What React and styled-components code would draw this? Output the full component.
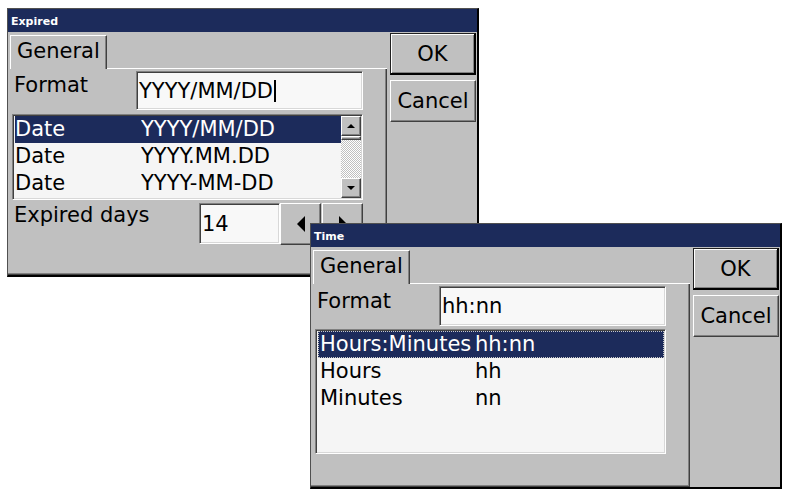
import React from "react";
import styled, { createGlobalStyle } from "styled-components";

const Global = createGlobalStyle`
  html, body { margin: 0; padding: 0; background: #fff; }
  body { width: 792px; height: 500px; position: relative; overflow: hidden; }
`;

const FONT = `"DejaVu Sans", Verdana, sans-serif`;
const NAVY = "#1c2b5b";

const Desktop = styled.div`
  position: relative;
  width: 792px;
  height: 500px;
  background: #fff;
`;

const Window = styled.div`
  position: absolute;
  left: ${(p) => p.$x}px;
  top: ${(p) => p.$y}px;
  width: ${(p) => p.$w}px;
  height: ${(p) => p.$h}px;
  z-index: ${(p) => p.$z};
  box-sizing: border-box;
  background: #c0c0c0;
  border-style: solid;
  border-color: #505050 #000 #000 #505050;
  border-width: 1px 2px 2px 1px;
  display: flex;
  flex-direction: column;
  font-family: ${FONT};
  color: #000;
`;

const TitleBar = styled.div`
  height: 23px;
  flex: none;
  background: ${NAVY};
  color: #fff;
  font: bold 11px ${FONT};
  display: flex;
  align-items: center;
  padding: 2px 0 0 3px;
  box-sizing: border-box;
`;

const Body = styled.div`
  flex: 1;
  display: flex;
  min-height: 0;
`;

const TabArea = styled.div`
  width: 379px;
  flex: none;
  display: flex;
  flex-direction: column;
`;

const TabStrip = styled.div`
  height: 37px;
  flex: none;
  display: flex;
  align-items: flex-end;
  padding-left: 2px;
  box-sizing: border-box;
`;

const Tab = styled.div`
  height: 34px;
  box-sizing: border-box;
  padding: 3px 6px 0 6px;
  border-top: 1px solid #fff;
  border-left: 1px solid #fff;
  border-right: 1px solid #404040;
  box-shadow: inset -1px 0 #808080;
  font-size: 21px;
  line-height: 24px;
`;

const TabFiller = styled.div`
  flex: 1;
  border-bottom: 1px solid #fff;
`;

const Pane = styled.div`
  flex: 1;
  display: flex;
  flex-direction: column;
  gap: 3px;
  padding: 2px 0 0 4px;
  box-sizing: border-box;
  border-right: 1px solid #404040;
  border-bottom: 1px solid #404040;
  box-shadow: inset -1px -1px #808080;
`;

const FieldRow = styled.div`
  display: flex;
  align-items: flex-start;
  height: ${(p) => p.$h}px;
  flex: none;
`;

const Label = styled.div`
  width: ${(p) => p.$w}px;
  flex: none;
  padding-left: ${(p) => p.$pad || 2}px;
  margin-top: ${(p) => p.$top || 0}px;
  font-size: 21px;
  line-height: 24px;
  white-space: nowrap;
  box-sizing: border-box;
`;

const Input = styled.div`
  width: ${(p) => p.$w}px;
  height: ${(p) => p.$h}px;
  flex: none;
  box-sizing: border-box;
  background: #f8f8f8;
  border-style: solid;
  border-width: 1px;
  border-color: #808080 #fff #fff #808080;
  box-shadow: inset 1px 1px #404040, inset -1px -1px #d8d8d8;
  display: flex;
  align-items: center;
  padding-left: 2px;
  font-size: 21px;
  line-height: 24px;
  white-space: nowrap;
`;

const Caret = styled.span`
  display: inline-block;
  width: 2px;
  height: 22px;
  background: #000;
  margin-left: 1px;
`;

const ListBox = styled.div`
  width: 351px;
  height: ${(p) => p.$h}px;
  flex: none;
  box-sizing: border-box;
  background: #f5f5f5;
  border-style: solid;
  border-width: 1px;
  border-color: #808080 #fff #fff #808080;
  box-shadow: inset 1px 1px #404040, inset -1px -1px #d8d8d8;
  padding: 1px 1px 1px 1px;
  display: flex;
  overflow: hidden;
`;

const Rows = styled.div`
  flex: 1;
  display: flex;
  flex-direction: column;
  min-width: 0;
  padding-left: 1px;
`;

const Row = styled.div`
  height: 27px;
  flex: none;
  display: flex;
  align-items: center;
  font-size: 21px;
  line-height: 27px;
  white-space: nowrap;
  background: ${(p) => (p.$selected ? NAVY : "transparent")};
  color: ${(p) => (p.$selected ? "#fff" : "#000")};
  outline: ${(p) => (p.$focus ? "1px dotted #c8c8c8" : "none")};
  outline-offset: -1px;
  padding-left: ${(p) => p.$pad}px;
`;

const Cell = styled.span`
  width: ${(p) => (p.$w ? `${p.$w}px` : "auto")};
  flex: none;
  overflow: hidden;
`;

const ScrollBar = styled.div`
  width: 20px;
  flex: none;
  display: flex;
  flex-direction: column;
`;

const Raised = styled.div`
  box-sizing: border-box;
  background: #c0c0c0;
  border-style: solid;
  border-width: 1px;
  border-color: #fff #404040 #404040 #fff;
  box-shadow: inset -1px -1px #808080;
  display: flex;
  align-items: center;
  justify-content: center;
`;

const ScrollButton = styled(Raised)`
  height: 20px;
  flex: none;
`;

const Thumb = styled(Raised)`
  height: 4px;
  flex: none;
`;

const Track = styled.div`
  flex: 1;
  background: repeating-conic-gradient(#c0c0c0 0 25%, #fff 0 50%) 0 0 / 2px 2px;
`;

const SpinButton = styled(Raised)`
  width: 41px;
  height: 42px;
  flex: none;
  margin-left: ${(p) => p.$gap || 0}px;
`;

const ButtonColumn = styled.div`
  flex: 1;
  display: flex;
  flex-direction: column;
  gap: 5px;
  padding: 1px 1px 0 3px;
  box-sizing: border-box;
`;

const PushButton = styled.div`
  height: ${(p) => p.$h}px;
  box-sizing: border-box;
  background: #c0c0c0;
  border-style: solid;
  border-width: ${(p) => (p.$default ? "1px 2px 2px 1px" : "1px")};
  border-color: ${(p) =>
    p.$default ? "#202020 #000 #000 #202020" : "#fff #404040 #404040 #fff"};
  box-shadow: ${(p) =>
    p.$default
      ? "inset 1px 1px #fff, inset -1px -1px #808080"
      : "inset -1px -1px #808080"};
  display: flex;
  align-items: center;
  justify-content: center;
  font-size: 21px;
  line-height: 24px;
`;

const Tri = ({ dir, w, h }) => {
  const pts = {
    up: `0,${h} ${w / 2},0 ${w},${h}`,
    down: `0,0 ${w},0 ${w / 2},${h}`,
    left: `${w},0 0,${h / 2} ${w},${h}`,
    right: `0,0 ${w},${h / 2} 0,${h}`,
  }[dir];
  return (
    <svg width={w} height={h} viewBox={`0 0 ${w} ${h}`}>
      <polygon points={pts} fill="#000" />
    </svg>
  );
};

function Dialog({ title, x, y, z, h, children }) {
  return (
    <Window $x={x} $y={y} $z={z} $w={472} $h={h}>
      <TitleBar>{title}</TitleBar>
      <Body>
        <TabArea>
          <TabStrip>
            <Tab>General</Tab>
            <TabFiller />
          </TabStrip>
          <Pane>{children}</Pane>
        </TabArea>
        <ButtonColumn>
          <PushButton $default $h={42}>OK</PushButton>
          <PushButton $h={42}>Cancel</PushButton>
        </ButtonColumn>
      </Body>
    </Window>
  );
}

const dateFormats = [
  ["Date", "YYYY/MM/DD"],
  ["Date", "YYYY.MM.DD"],
  ["Date", "YYYY-MM-DD"],
];

const timeFormats = [
  ["Hours:Minutes", "hh:nn"],
  ["Hours", "hh"],
  ["Minutes", "nn"],
];

export default function App() {
  return (
    <>
      <Global />
      <Desktop>
        <Dialog title="Expired" x={7} y={8} z={1} h={269}>
          <FieldRow $h={40}>
            <Label $w={124} $top={2}>Format</Label>
            <Input $w={227} $h={39}>
              YYYY/MM/DD
              <Caret />
            </Input>
          </FieldRow>
          <ListBox $h={86}>
            <Rows>
              {dateFormats.map(([a, b], i) => (
                <Row key={i} $selected={i === 0} $pad={0}>
                  <Cell $w={126}>{a}</Cell>
                  <Cell>{b}</Cell>
                </Row>
              ))}
            </Rows>
            <ScrollBar>
              <ScrollButton>
                <Tri dir="up" w={8} h={4} />
              </ScrollButton>
              <Thumb />
              <Track />
              <ScrollButton>
                <Tri dir="down" w={8} h={4} />
              </ScrollButton>
            </ScrollBar>
          </ListBox>
          <FieldRow $h={42}>
            <Label $w={187} $top={0}>Expired days</Label>
            <Input $w={81} $h={41}>14</Input>
            <SpinButton>
              <Tri dir="left" w={8} h={16} />
            </SpinButton>
            <SpinButton $gap={1}>
              <Tri dir="right" w={8} h={16} />
            </SpinButton>
          </FieldRow>
        </Dialog>

        <Dialog title="Time" x={310} y={223} z={2} h={266}>
          <FieldRow $h={40}>
            <Label $w={124} $top={3}>Format</Label>
            <Input $w={227} $h={40}>hh:nn</Input>
          </FieldRow>
          <ListBox $h={125}>
            <Rows>
              {timeFormats.map(([a, b], i) => (
                <Row key={i} $selected={i === 0} $focus={i === 0} $pad={2}>
                  <Cell $w={155}>{a}</Cell>
                  <Cell>{b}</Cell>
                </Row>
              ))}
            </Rows>
          </ListBox>
        </Dialog>
      </Desktop>
    </>
  );
}
